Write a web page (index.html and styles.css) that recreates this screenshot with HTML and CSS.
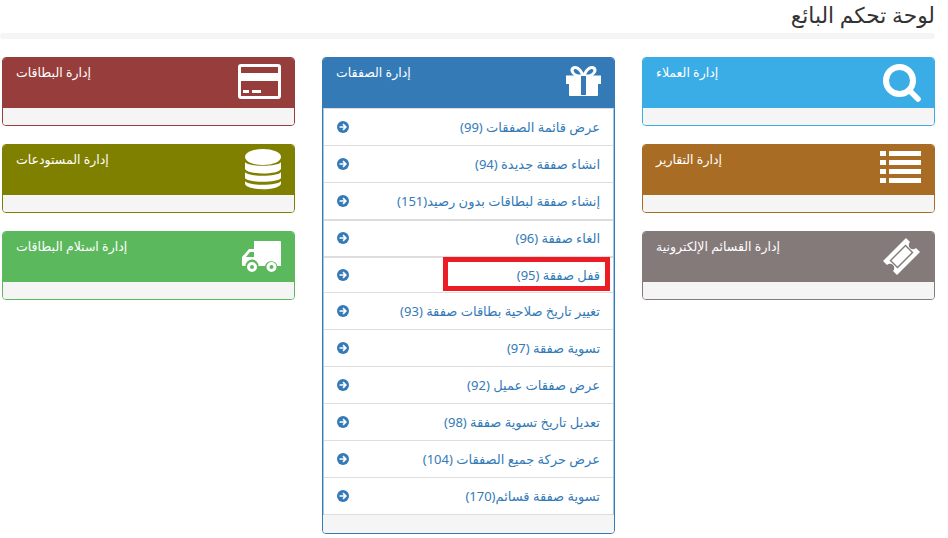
FILE: index.html
```html
<!DOCTYPE html>
<html lang="ar" dir="rtl">
<head>
    <meta charset="UTF-8">
    <title>لوحة تحكم البائع</title>
    <link rel="stylesheet" href="styles.css">
</head>
<body>
    <h1 class="page-title">لوحة تحكم البائع</h1>
    <div class="title-rule"></div>

    <div class="columns">
        <!-- العمود الأيمن -->
        <div class="col">
            <div class="panel panel-sky">
                <div class="panel-heading">
                    <span class="panel-title">إدارة العملاء</span>
                    <svg class="panel-icon icon-top6" width="38" height="38" viewBox="0 0 38 38"><circle cx="16.500" cy="16.500" r="13.500" fill="none" stroke="#fff" stroke-width="6"/><path d="M26 26 L35 35" stroke="#fff" stroke-width="5.500" stroke-linecap="round"/></svg>
                </div>
                <div class="panel-footer"></div>
            </div>
            <div class="panel panel-brown">
                <div class="panel-heading">
                    <span class="panel-title">إدارة التقارير</span>
                    <svg class="panel-icon icon-top6" width="41" height="32" viewBox="0 0 41 32" fill="#fff"><path d="M0 0h6v5H0zM9 0h32v5H9zM0 9h6v5H0zM9 9h32v5H9zM0 18h6v5H0zM9 18h32v5H9zM0 27h6v5H0zM9 27h32v5H9z"/></svg>
                </div>
                <div class="panel-footer"></div>
            </div>
            <div class="panel panel-gray">
                <div class="panel-heading">
                    <span class="panel-title">إدارة القسائم الإلكترونية</span>
                    <svg class="panel-icon icon-top5" width="39" height="38" viewBox="0 0 39 38"><path fill="#fff" fill-rule="evenodd" d="M24 1 L28 5 A3.500 3.500 0 0 0 34 11 L38 15 L15 38 L11 34 A3.500 3.500 0 0 0 5 28 L1 24 Z M23.500 7.500 L7.500 23.500 L15.500 31.500 L31.500 15.500 Z"/><path fill="#fff" d="M23.500 9.500 L29.500 15.500 L15.500 29.500 L9.500 23.500 Z"/></svg>
                </div>
                <div class="panel-footer"></div>
            </div>
        </div>

        <!-- العمود الأوسط -->
        <div class="col">
            <div class="panel panel-primary">
                <div class="panel-heading">
                    <span class="panel-title">إدارة الصفقات</span>
                    <svg class="panel-icon icon-top8" width="35" height="30" viewBox="0 0 35 30" fill="#fff"><path fill-rule="evenodd" d="M7 0.500 C11 -1 15 2 17.500 7 C20 2 24 -1 28 0.500 C32 2 31 7 27 9.500 H35 V18 H32 V29 A1 1 0 0 1 31 30 H4 A1 1 0 0 1 3 29 V18 H0 V9.500 H8 C4 7 3 2 7 0.500 Z M9 3 C6.500 3.500 7.500 7 12 8.500 H15 C13 5 11 2.500 9 3 Z M26 3 C24 2.500 22 5 20 8.500 H23 C27.500 7 28.500 3.500 26 3 Z M15 10 V29 H20 V10 Z"/></svg>
                </div>
                <ul class="list">
                    <li class="list-item"><a href="#">عرض قائمة الصفقات (99)</a><svg class="arrow" width="12" height="12"><use href="#go"/></svg></li>
                    <li class="list-item"><a href="#">انشاء صفقة جديدة (94)</a><svg class="arrow" width="12" height="12"><use href="#go"/></svg></li>
                    <li class="list-item double"><a href="#">إنشاء صفقة لبطاقات بدون رصيد(151)</a><svg class="arrow" width="12" height="12"><use href="#go"/></svg></li>
                    <li class="list-item double"><a href="#">الغاء صفقة (96)</a><svg class="arrow" width="12" height="12"><use href="#go"/></svg></li>
                    <li class="list-item short"><a href="#">قفل صفقة (95)</a><svg class="arrow" width="12" height="12"><use href="#go"/></svg><span class="highlight"></span></li>
                    <li class="list-item"><a href="#">تغيير تاريخ صلاحية بطاقات صفقة (93)</a><svg class="arrow" width="12" height="12"><use href="#go"/></svg></li>
                    <li class="list-item"><a href="#">تسوية صفقة (97)</a><svg class="arrow" width="12" height="12"><use href="#go"/></svg></li>
                    <li class="list-item"><a href="#">عرض صفقات عميل (92)</a><svg class="arrow" width="12" height="12"><use href="#go"/></svg></li>
                    <li class="list-item"><a href="#">تعديل تاريخ تسوية صفقة (98)</a><svg class="arrow" width="12" height="12"><use href="#go"/></svg></li>
                    <li class="list-item"><a href="#">عرض حركة جميع الصفقات (104)</a><svg class="arrow" width="12" height="12"><use href="#go"/></svg></li>
                    <li class="list-item"><a href="#">تسوية صفقة قسائم(170)</a><svg class="arrow" width="12" height="12"><use href="#go"/></svg></li>
                </ul>
                <div class="panel-footer"></div>
            </div>
        </div>

        <!-- العمود الأيسر -->
        <div class="col">
            <div class="panel panel-red">
                <div class="panel-heading">
                    <span class="panel-title">إدارة البطاقات</span>
                    <svg class="panel-icon icon-top6" width="43" height="35" viewBox="0 0 43 35"><path fill="#fff" fill-rule="evenodd" d="M3 0 H40 A3 3 0 0 1 43 3 V32 A3 3 0 0 1 40 35 H3 A3 3 0 0 1 0 32 V3 A3 3 0 0 1 3 0 Z M3 3 V9 H40 V3 Z M3 17 V32 H40 V17 Z"/><path fill="#fff" d="M5 26h6v3H5zM14 26h9v3H14z"/></svg>
                </div>
                <div class="panel-footer"></div>
            </div>
            <div class="panel panel-olive">
                <div class="panel-heading">
                    <span class="panel-title">إدارة المستودعات</span>
                    <svg class="panel-icon icon-top4" width="36" height="41" viewBox="0 0 36 41" fill="#fff"><ellipse cx="18" cy="8" rx="18" ry="8"/><path d="M0 13 C3 18 33 18 36 13 V20 C33 26 3 26 0 20 Z"/><path d="M0 23 C3 28 33 28 36 23 V29 C33 34 3 34 0 29 Z"/><path d="M0 32 C3 37 33 37 36 32 V35 C33 42 3 42 0 35 Z"/></svg>
                </div>
                <div class="panel-footer"></div>
            </div>
            <div class="panel panel-green">
                <div class="panel-heading">
                    <span class="panel-title">إدارة استلام البطاقات</span>
                    <svg class="panel-icon icon-top9" width="39" height="32" viewBox="0 0 39 32"><path fill="#fff" fill-rule="evenodd" d="M12 0 H38 A1 1 0 0 1 39 1 V25 H35.500 A6.500 6.500 0 0 0 23 25 H16.500 A6.500 6.500 0 0 0 3.500 25 H1 A1 1 0 0 1 0 24 V16 L7 8 H12 Z M8 11 L4 16 H12 V11 Z"/><circle cx="10" cy="26" r="3.500" fill="none" stroke="#fff" stroke-width="3"/><circle cx="29.500" cy="26" r="3.500" fill="none" stroke="#fff" stroke-width="3"/></svg>
                </div>
                <div class="panel-footer"></div>
            </div>
        </div>
    </div>

    <svg class="defs" width="0" height="0">
        <symbol id="go" viewBox="0 0 12 12">
            <circle cx="6" cy="6" r="6" fill="#337ab7"/>
            <path d="M2.500 6H8M6 3.200 8.800 6 6 8.800" fill="none" stroke="#fff" stroke-width="1.700"/>
        </symbol>
    </svg>
</body>
</html>
```

FILE: styles.css
```css
body {
    margin: 0;
    padding: 0 13px 0 2px;
    font-family: "Noto Sans", "DejaVu Sans", sans-serif;
    font-size: 12.5px;
    color: #333;
    background-color: #fff;
}

.page-title {
    margin: 0;
    height: 33px;
    font-size: 21.75px;
    font-weight: normal;
    line-height: 30px;
    color: #333;
}

.title-rule {
    height: 6px;
    margin: 0 0 18px -2px;
    border-radius: 3px;
    background-color: #f5f5f5;
}

.columns {
    display: grid;
    grid-template-columns: repeat(3, 293px);
    gap: 27px;
    align-items: start;
}

.col {
    display: flex;
    flex-direction: column;
    gap: 18px;
}

.panel {
    border: 1px solid;
    border-radius: 4px;
    overflow: hidden;
    background-color: #fff;
}

.panel-heading {
    display: flex;
    direction: ltr;
    justify-content: space-between;
    align-items: flex-start;
    height: 50px;
    box-sizing: border-box;
    padding: 0 13px;
    color: #fff;
}

.panel-title {
    direction: rtl;
    margin-top: 6px;
    line-height: 18px;
}

.icon-top4 { margin-top: 4px; }
.icon-top5 { margin-top: 5px; }
.icon-top6 { margin-top: 6px; }
.icon-top8 { margin-top: 8px; }
.icon-top9 { margin-top: 9px; }

.panel-footer {
    height: 17px;
    background-color: #f5f5f5;
}

.panel-sky { border-color: #3aace6; }
.panel-sky .panel-heading { background-color: #3aace6; }
.panel-brown { border-color: #a96c25; }
.panel-brown .panel-heading { background-color: #a96c25; }
.panel-gray { border-color: #847a7a; }
.panel-gray .panel-heading { background-color: #847a7a; }
.panel-primary { border-color: #337ab7; }
.panel-primary .panel-heading { background-color: #337ab7; }
.panel-primary .panel-footer { height: 18px; }
.panel-red { border-color: #973e3c; }
.panel-red .panel-heading { background-color: #973e3c; }
.panel-olive { border-color: #808000; }
.panel-olive .panel-heading { background-color: #808000; }
.panel-green { border-color: #5cb85c; }
.panel-green .panel-heading { background-color: #5cb85c; }

.list {
    margin: 0;
    padding: 0;
    list-style: none;
    font-size: 13px;
    border-top: 1px solid #ddd;
    border-left: 1px solid #a9c6e0;
    border-right: 1px solid #a9c6e0;
}

.list-item {
    position: relative;
    display: flex;
    justify-content: space-between;
    align-items: center;
    height: 37px;
    box-sizing: border-box;
    padding: 0 13px;
    border-bottom: 1px solid #ddd;
}

.list-item.double {
    box-shadow: 0 1px 0 #ddd;
}

.list-item.short {
    height: 36px;
}

.list-item a {
    color: #337ab7;
    text-decoration: none;
}

.highlight {
    position: absolute;
    top: 0;
    right: 3px;
    width: 167px;
    height: 34px;
    box-sizing: border-box;
    border: 5px solid #ed1c24;
}

.defs {
    position: absolute;
}
```
